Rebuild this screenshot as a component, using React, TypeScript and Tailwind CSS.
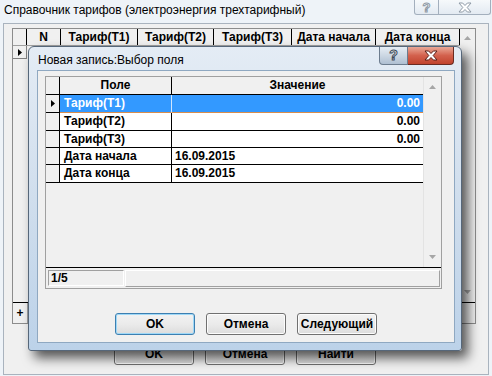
import React from "react";

function Arrow({ dir }: { dir: "up" | "down" }) {
  return (
    <svg width="7" height="4" viewBox="0 0 7 4">
      {dir === "up" ? (
        <path d="M0 4 L3.5 0 L7 4 Z" fill="#a6a6a6" />
      ) : (
        <path d="M0 0 L7 0 L3.5 4 Z" fill="#a6a6a6" />
      )}
    </svg>
  );
}

function RowMark() {
  return (
    <svg width="4" height="7" viewBox="0 0 4 7">
      <path d="M0 0 L4 3.5 L0 7 Z" fill="#000" />
    </svg>
  );
}

function CloseGlyph({ stroke }: { stroke: string }) {
  return (
    <svg width="14" height="11" viewBox="0 0 14 11">
      <path
        d="M1 1 H4.6 L7 3.5 L9.4 1 H13 L9.2 5.5 L13 10 H9.4 L7 7.5 L4.6 10 H1 L4.8 5.5 Z"
        fill="#fff"
        stroke={stroke}
        strokeWidth="1"
        strokeLinejoin="round"
      />
    </svg>
  );
}

function Button({ label, focused }: { label: string; focused?: boolean }) {
  return (
    <div
      className={
        focused
          ? "flex h-[22px] w-[80px] items-center justify-center rounded-[3px] border border-[#3c7fb1] bg-gradient-to-b from-[#f2f2f2] via-[#ebebeb] to-[#dcdcdc] font-bold shadow-[inset_0_0_0_1px_#9fd8f7]"
          : "flex h-[22px] w-[80px] items-center justify-center rounded-[3px] border border-[#707070] bg-gradient-to-b from-[#f2f2f2] via-[#ebebeb] to-[#dcdcdc] font-bold shadow-[inset_0_0_0_1px_#fcfcfc]"
      }
    >
      {label}
    </div>
  );
}

const outerCols = [
  { w: "w-[34px]", t: "N" },
  { w: "w-[77px]", t: "Тариф(Т1)" },
  { w: "w-[76px]", t: "Тариф(Т2)" },
  { w: "w-[78px]", t: "Тариф(Т3)" },
  { w: "w-[84px]", t: "Дата начала" },
  { w: "w-[84px]", t: "Дата конца" },
];

const rows = [
  { name: "Тариф(Т1)", value: "0.00", right: true, h: "h-[18px]" },
  { name: "Тариф(Т2)", value: "0.00", right: true, h: "h-[18px]" },
  { name: "Тариф(Т3)", value: "0.00", right: true, h: "h-[17px]" },
  { name: "Дата начала", value: "16.09.2015", right: false, h: "h-[17px]" },
  { name: "Дата конца", value: "16.09.2015", right: false, h: "h-[18px]" },
];

export default function App() {
  return (
    <div className="relative h-[376px] w-[492px] overflow-hidden bg-[#eef3f8] font-['Liberation_Sans',Arial,sans-serif] text-[12px] leading-[15px] text-black">
      {/* outer window title bar */}
      <div className="flex h-[23px] items-start">
        <div className="flex-1 pl-[4px] pt-[3px]">Справочник тарифов (электроэнергия трехтарифный)</div>
        <div className="mr-[1px] flex">
          <div className="flex h-[15px] w-[25px] items-center justify-center rounded-bl-[3px] border border-t-0 border-[#a3afbd] bg-gradient-to-b from-[#f6f9fb] to-[#e3eaf2] text-[13px] font-bold text-white [-webkit-text-stroke:1px_#8f9aa6]">
            ?
          </div>
          <div className="flex h-[15px] w-[52px] items-center justify-center rounded-br-[3px] border border-l-0 border-t-0 border-[#a3afbd] bg-gradient-to-b from-[#f6f9fb] to-[#e3eaf2]">
            <CloseGlyph stroke="#8f9aa6" />
          </div>
        </div>
      </div>

      {/* outer window client */}
      <div className="mx-[3px] flex h-[352px] flex-col border border-[#a9b3be] bg-[#f0f0f0]">
        <div className="ml-[8px] mt-[4px] flex h-[296px] w-[464px] flex-col border border-[#8c8c8c] bg-[#f0f0f0]">
          <div className="flex h-[273px]">
            <div className="flex w-[447px] flex-col">
              <div className="flex h-[17px] border-b border-[#a0a0a0] font-bold">
                <div className="w-[14px] border-r border-black" />
                {outerCols.map((c) => (
                  <div key={c.t} className={c.w + " flex items-center justify-center border-r border-black"}>
                    {c.t}
                  </div>
                ))}
              </div>
              <div className="flex h-[13px] w-[14px] items-center justify-center border-b border-r border-[#808080]">
                <RowMark />
              </div>
            </div>
            <div className="flex flex-1 flex-col items-center justify-between pb-[8px] pt-[7px]">
              <Arrow dir="up" />
              <Arrow dir="down" />
            </div>
          </div>
          <div className="h-[1px] bg-black" />
          <div className="flex h-[20px] justify-between">
            <div className="flex w-[15px] items-center justify-center border-r border-[#a0a0a0] font-bold">+</div>
            <div className="w-[14px] border-l border-[#a0a0a0]" />
          </div>
        </div>

        <div className="mt-[19px] flex gap-[11px] pl-[110px]">
          <Button label="OK" />
          <Button label="Отмена" />
          <Button label="Найти" />
        </div>
      </div>

      {/* dialog window on top */}
      <div className="absolute left-[28px] top-[46px] flex h-[305px] w-[434px] flex-col rounded-b-[3px] rounded-t-[6px] border border-[#56677a] bg-gradient-to-b from-[#e4ecf5] via-[#d0deed] to-[#bcd2e9] shadow-[6px_7px_12px_rgba(0,0,0,0.65)]">
        <div className="flex h-[23px] items-start">
          <div className="flex-1 pl-[9px] pt-[6px]">Новая запись:Выбор поля</div>
          <div className="mr-[7px] flex">
            <div className="flex h-[18px] w-[29px] items-center justify-center rounded-bl-[4px] border border-t-0 border-[#6c7c8e] bg-gradient-to-b from-[#e6edf4] via-[#ccd7e3] to-[#aebfd2] text-[14px] font-bold text-white [-webkit-text-stroke:1px_#3f4d5c]">
              ?
            </div>
            <div className="flex h-[18px] w-[46px] items-center justify-center rounded-br-[4px] border border-l-0 border-t-0 border-[#6a2b22] bg-gradient-to-b from-[#e8a897] via-[#d3614d] to-[#c1432d]">
              <CloseGlyph stroke="#5a1f17" />
            </div>
          </div>
        </div>

        <div className="ml-[8px] mr-[6px] flex h-[273px] flex-col border border-[#8fa8c1] bg-[#f0f0f0]">
          {/* grid panel */}
          <div className="ml-[7px] mt-[5px] flex h-[213px] w-[397px] flex-col border border-[#a0a0a0] font-bold">
            <div className="flex h-[190px]">
              <div className="flex w-[377px] flex-col">
                <div className="flex h-[18px] border-b border-black">
                  <div className="w-[14px] border-r border-black" />
                  <div className="flex w-[112px] items-center justify-center border-r border-black">Поле</div>
                  <div className="flex flex-1 items-center justify-center">Значение</div>
                </div>
                {rows.map((r, i) => {
                  const sel = i === 0;
                  return (
                    <div key={r.name} className={r.h + " flex"}>
                      <div className="flex w-[14px] items-center justify-center border-b border-r border-black">
                        {sel && <RowMark />}
                      </div>
                      <div
                        className={
                          sel
                            ? "flex w-[112px] items-center border-b border-r border-b-[#d98d4c] border-r-[#cfe6ff] bg-[#3399ff] pl-[4px] text-white"
                            : "flex w-[112px] items-center border-b border-r border-black bg-white pl-[4px]"
                        }
                      >
                        {r.name}
                      </div>
                      <div
                        className={
                          (sel
                            ? "border-b-[#d98d4c] bg-[#3399ff] text-white "
                            : "border-black bg-white ") +
                          (r.right ? "justify-end pr-[3px] " : "justify-start pl-[3px] ") +
                          "flex flex-1 items-center border-b"
                        }
                      >
                        {r.value}
                      </div>
                    </div>
                  );
                })}
              </div>
              <div className="flex flex-1 flex-col items-center justify-between border-l border-[#e3e3e3] pb-[8px] pt-[8px]">
                <Arrow dir="up" />
                <Arrow dir="down" />
              </div>
            </div>
            <div className="h-[1px] bg-black" />
            <div className="flex h-[20px] gap-[1px] pl-[2px] pr-[1px] pt-[2px]">
              <div className="flex h-[16px] w-[76px] items-center border border-b-white border-l-[#a0a0a0] border-r-white border-t-[#a0a0a0] pl-[2px]">
                1/5
              </div>
              <div className="h-[17px] flex-1 border border-b-[#a0a0a0] border-l-white border-r-[#a0a0a0] border-t-white" />
            </div>
          </div>

          <div className="mt-[24px] flex gap-[11px] pl-[77px]">
            <Button label="OK" focused />
            <Button label="Отмена" />
            <Button label="Следующий" />
          </div>
        </div>
      </div>
    </div>
  );
}
